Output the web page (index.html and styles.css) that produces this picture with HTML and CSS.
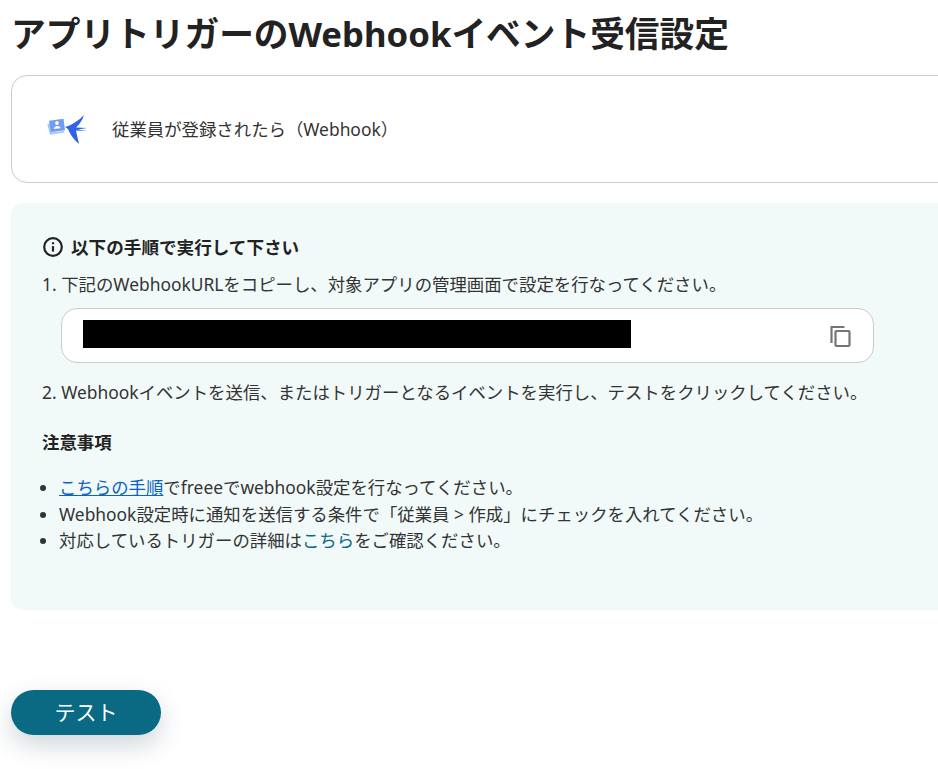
FILE: index.html
```html
<!DOCTYPE html>
<html lang="ja">
<head>
    <title>アプリトリガーのWebhookイベント受信設定</title>
    <meta charset="utf-8">
    <link rel="stylesheet" href="styles.css">
</head>
<body>
    <div class="page">
        <h1>アプリトリガーのWebhookイベント受信設定</h1>

        <div class="trigger-card">
            <svg class="trigger-icon" width="40" height="34" viewBox="0 0 40 34">
                <path d="M0.3 12 L2.5 11.5 L4.5 20.5 L17 19 L17.3 20.5 L3 22.8 Z" fill="#a9c3fb"/>
                <path d="M2 8.8 L16.5 6.8 L18 18.2 L3.8 20.2 Z" fill="#6f9cf8"/>
                <circle cx="10" cy="11" r="1.9" fill="#fff"/>
                <path d="M6.8 17 C7 13.5 13 13 13.6 16.2 Z" fill="#fff"/>
                <path d="M18 15 C25 13 31 9 37 3 C35 9 32 13 29 15.5 L40 16 L31 17.5 L40 19 L29 18.5 C30 23 31 28 32 32 C27 28 23 22 21 17 Z" fill="#2f62e6"/>
            </svg>
            <span>従業員が登録されたら（Webhook）</span>
        </div>

        <div class="guide">
            <div class="guide-title">
                <svg width="22" height="22" viewBox="0 0 24 24" fill="none" stroke="#222" stroke-width="2.4">
                    <circle cx="12" cy="12" r="9.6"/>
                    <path d="M12 11 V17"/>
                    <path d="M12 6.8 V9"/>
                </svg>
                <strong>以下の手順で実行して下さい</strong>
            </div>
            <p class="step">1. 下記のWebhookURLをコピーし、対象アプリの管理画面で設定を行なってください。</p>
            <div class="url-box">
                <div class="masked"></div>
                <svg class="copy-icon" width="24" height="24" viewBox="0 0 24 24" fill="none" stroke="#757575" stroke-width="2.2">
                    <path d="M3.5 19 V3 H16.5"/>
                    <rect x="7.5" y="7" width="14" height="15" rx="1"/>
                </svg>
            </div>
            <p class="step">2. Webhookイベントを送信、またはトリガーとなるイベントを実行し、テストをクリックしてください。</p>
            <h3>注意事項</h3>
            <ul>
                <li><a class="link" href="#">こちらの手順</a>でfreeeでwebhook設定を行なってください。</li>
                <li>Webhook設定時に通知を送信する条件で「従業員 &gt; 作成」にチェックを入れてください。</li>
                <li>対応しているトリガーの詳細は<a class="link-plain" href="#">こちら</a>をご確認ください。</li>
            </ul>
        </div>

        <button class="test-btn">テスト</button>
    </div>
</body>
</html>
```

FILE: styles.css
```css
html, body {
    margin: 0;
    padding: 0;
    height: 100%;
    overflow: hidden;
    background: #fff;
}
body {
    font-family: "Noto Sans", "Noto Sans CJK JP", sans-serif;
    color: #333;
    font-size: 17.4px;
}
.page {
    width: 1000px;
    padding: 0 0 0 11px;
}
h1 {
    margin: 0;
    padding-top: 10px;
    height: 75px;
    box-sizing: border-box;
    font-size: 34.7px;
    line-height: 48px;
    font-weight: 700;
    color: #222;
}
.trigger-card {
    display: flex;
    align-items: center;
    gap: 25px;
    height: 108px;
    box-sizing: border-box;
    padding-left: 35px;
    border: 1px solid #ccc;
    border-radius: 16px;
}
.trigger-card span {
    margin-bottom: 2px;
}
.guide {
    margin-top: 20px;
    height: 407px;
    box-sizing: border-box;
    padding: 32px 0 0 31px;
    background: #f1faf9;
    border-radius: 12px;
}
.guide-title {
    display: flex;
    align-items: center;
    gap: 7px;
    height: 24px;
    color: #222;
}
.guide-title strong {
    font-size: 17.6px;
    margin-bottom: 2px;
}
.step {
    margin: 0;
    line-height: 24px;
}
.guide-title + .step {
    margin-top: 13px;
}
.url-box {
    display: flex;
    align-items: center;
    justify-content: space-between;
    width: 813px;
    height: 55px;
    box-sizing: border-box;
    margin: 12px 0 17px 19px;
    padding: 0 21px 0 21px;
    background: #fff;
    border: 1px solid #ccc;
    border-radius: 16px;
}
.masked {
    width: 548px;
    height: 28px;
    margin-bottom: 4px;
    background: #000;
}
h3 {
    margin: 26px 0 0;
    font-size: 17.4px;
    line-height: 24px;
    color: #222;
}
ul {
    margin: 20px 0 0;
    padding-left: 17px;
}
li {
    line-height: 26.5px;
}
.link {
    color: #0b63c4;
}
.link-plain {
    color: #0a6a84;
    text-decoration: none;
}
.test-btn {
    display: block;
    margin-top: 80px;
    width: 150px;
    height: 45px;
    padding: 0 0 4px;
    border: none;
    border-radius: 23px;
    background: #0a6a84;
    color: #fff;
    font-family: inherit;
    font-size: 21px;
    box-shadow: 0 10px 26px rgba(10, 50, 70, 0.2);
}
```
